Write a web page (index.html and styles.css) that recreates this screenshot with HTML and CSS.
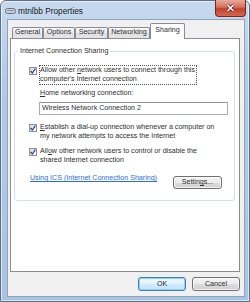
FILE: index.html
```html
<!DOCTYPE html>
<html lang="en">
<head>
    <meta charset="UTF-8">
    <title>mtnlbb Properties</title>
    <link rel="stylesheet" href="styles.css">
</head>
<body>
<div class="window">
    <div class="titlebar">
        <svg class="app-icon" width="11" height="6" viewBox="0 0 11 6">
            <rect x="0.5" y="0.5" width="10" height="5" rx="2" fill="#c9ced6" stroke="#6d7480"/>
            <rect x="2" y="2" width="7" height="1" fill="#8a93a0"/>
        </svg>
        <span class="title">mtnlbb Properties</span>
        <div class="close">
            <svg width="9" height="8" viewBox="0 0 9 8">
                <path d="M1.5 1 L7.5 7 M7.5 1 L1.5 7" stroke="#5a2620" stroke-width="3"/>
                <path d="M1.5 1 L7.5 7 M7.5 1 L1.5 7" stroke="#fff" stroke-width="1.6"/>
            </svg>
        </div>
    </div>
    <div class="client">
        <div class="tabs">
            <span class="tab t-general">General</span>
            <span class="tab t-options">Options</span>
            <span class="tab t-security">Security</span>
            <span class="tab t-networking">Networking</span>
            <span class="tab t-sharing active">Sharing</span>
        </div>
        <div class="panel">
            <fieldset class="group">
                <legend>Internet Connection Sharing</legend>
                <div class="check">
                    <span class="box"><svg width="6" height="6" viewBox="0 0 6 6"><path d="M0.6 3 L2.3 5 L5.4 0.6" fill="none" stroke="#2b4b8c" stroke-width="1.3"/></svg></span>
                    <span class="text focus">Allow other <u>n</u>etwork users to connect through this<br>computer's Internet connection</span>
                </div>
                <div class="indent">
                    <div class="lbl"><u>H</u>ome networking connection:</div>
                    <div class="field">Wireless Network Connection 2</div>
                </div>
                <div class="check second">
                    <span class="box"><svg width="6" height="6" viewBox="0 0 6 6"><path d="M0.6 3 L2.3 5 L5.4 0.6" fill="none" stroke="#2b4b8c" stroke-width="1.3"/></svg></span>
                    <span class="text"><u>E</u>stablish a dial-up connection whenever a computer on<br>my network attempts to access the Internet</span>
                </div>
                <div class="check third">
                    <span class="box"><svg width="6" height="6" viewBox="0 0 6 6"><path d="M0.6 3 L2.3 5 L5.4 0.6" fill="none" stroke="#2b4b8c" stroke-width="1.3"/></svg></span>
                    <span class="text">All<u>o</u>w other network users to control or disable the<br>shared Internet connection</span>
                </div>
                <div class="foot">
                    <a class="link" href="#">Using ICS (Internet Connection Sharing)</a>
                    <span class="btn settings">Settin<u>g</u>s...</span>
                </div>
            </fieldset>
        </div>
        <div class="actions">
            <span class="btn default">OK</span>
            <span class="btn">Cancel</span>
        </div>
    </div>
</div>
</body>
</html>
```

FILE: styles.css
```css
body {
    margin: 0;
    font-family: "Liberation Sans", Arial, sans-serif;
    font-size: 7.1px;
    line-height: 9px;
    color: #2e2e2e;
    background: #fff;
}
.window {
    width: 250px;
    height: 302px;
    box-sizing: border-box;
    border: 1px solid #5f6f84;
    border-radius: 6px 6px 0 0;
    padding: 0 4px 4px 6px;
    background: linear-gradient(#c6daef, #b2cae5 30%, #a9c3e0);
    box-shadow: inset 0 0 0 1px rgba(255, 255, 255, 0.55);
    display: flex;
    flex-direction: column;
}
.titlebar {
    height: 18px;
    display: flex;
    align-items: center;
}
.app-icon {
    margin-left: -2px;
    margin-top: 1px;
}
.title {
    margin-left: 2px;
    margin-top: 2px;
    font-size: 8.3px;
    color: #1a1a1a;
}
.close {
    margin-left: auto;
    margin-right: -1px;
    align-self: flex-start;
    margin-top: -1px;
    width: 31px;
    height: 17px;
    box-sizing: border-box;
    border: 1px solid #6b2a22;
    border-top: none;
    border-radius: 0 0 4px 4px;
    background: linear-gradient(#e9a99b, #d0705d 45%, #c2412c 55%, #d9664c);
    display: flex;
    align-items: center;
    justify-content: center;
}
.client {
    flex: 1;
    border: 1px solid #8ea4bd;
    background: #f0f0f0;
    padding: 3px 4px 0 2px;
    display: flex;
    flex-direction: column;
}
.tabs {
    height: 15px;
    display: flex;
    align-items: flex-end;
    padding-left: 2px;
}
.tab {
    height: 11px;
    box-sizing: border-box;
    border: 1px solid #898c95;
    border-bottom: none;
    border-radius: 2px 2px 0 0;
    background: linear-gradient(#f9f9f9, #ebebeb 50%, #dedede 51%, #e6e6e6);
    text-align: center;
    line-height: 9px;
}
.t-general { width: 31px; }
.t-options { width: 32px; }
.t-security { width: 33px; }
.t-networking { width: 42px; }
.tab.active {
    width: 35px;
    height: 16px;
    margin-bottom: -1px;
    background: #fff;
    position: relative;
    z-index: 1;
    line-height: 12px;
}
.panel {
    height: 234px;
    box-sizing: border-box;
    border: 1px solid #898c95;
    background: #fff;
    padding: 8px 4px 0 3px;
}
.group {
    margin: 0;
    min-width: 0;
    border: 1px solid #d5dfe5;
    border-radius: 3px;
    padding: 9px 12px 11px 3px;
}
.group legend {
    padding: 0 2px;
    line-height: 9px;
}
.check {
    display: flex;
    align-items: flex-start;
    margin-left: 11px;
}
.box {
    width: 8px;
    height: 8px;
    box-sizing: border-box;
    border: 1px solid #8e8f8f;
    background: linear-gradient(135deg, #d8d8d8, #f6f6f6 70%, #ffffff);
    margin-top: 2px;
    margin-right: 2px;
    display: flex;
    align-items: center;
    justify-content: center;
}
.text {
    border: 1px solid transparent;
}
.text.focus {
    border: 1px dotted #555;
    padding-right: 1px;
}
.second {
    margin-top: 7px;
}
.third {
    margin-top: 4px;
}
.indent {
    margin-left: 21px;
}
.lbl {
    margin-top: 4px;
    padding-left: 1px;
}
.field {
    margin-top: 4px;
    width: 189px;
    height: 13px;
    box-sizing: border-box;
    border: 1px solid #abadb3;
    border-top-color: #8e9299;
    padding-left: 2px;
    line-height: 11px;
}
.foot {
    margin-top: 8px;
    margin-left: 12px;
    display: flex;
    align-items: flex-start;
    justify-content: space-between;
}
.link {
    color: #2a6fd0;
    text-decoration: underline;
}
.btn {
    width: 48px;
    height: 14px;
    box-sizing: border-box;
    border: 1px solid #707070;
    border-radius: 3px;
    background: linear-gradient(#f3f3f3, #ebebeb 50%, #dddddd 51%, #cfcfcf);
    box-shadow: inset 0 0 0 1px rgba(255, 255, 255, 0.7);
    text-align: center;
    line-height: 12px;
}
.btn.settings {
    width: 49px;
    height: 13px;
    margin-top: 2px;
    line-height: 11px;
}
.btn.default {
    border-color: #3c7fb1;
    background: linear-gradient(#eef7fd, #e2f2fc 50%, #d0eafb 51%, #c4e4f9);
    box-shadow: inset 0 0 0 1px #8fd0f5;
}
.actions {
    margin-top: 5px;
    display: flex;
    justify-content: flex-end;
    gap: 6px;
}
```
